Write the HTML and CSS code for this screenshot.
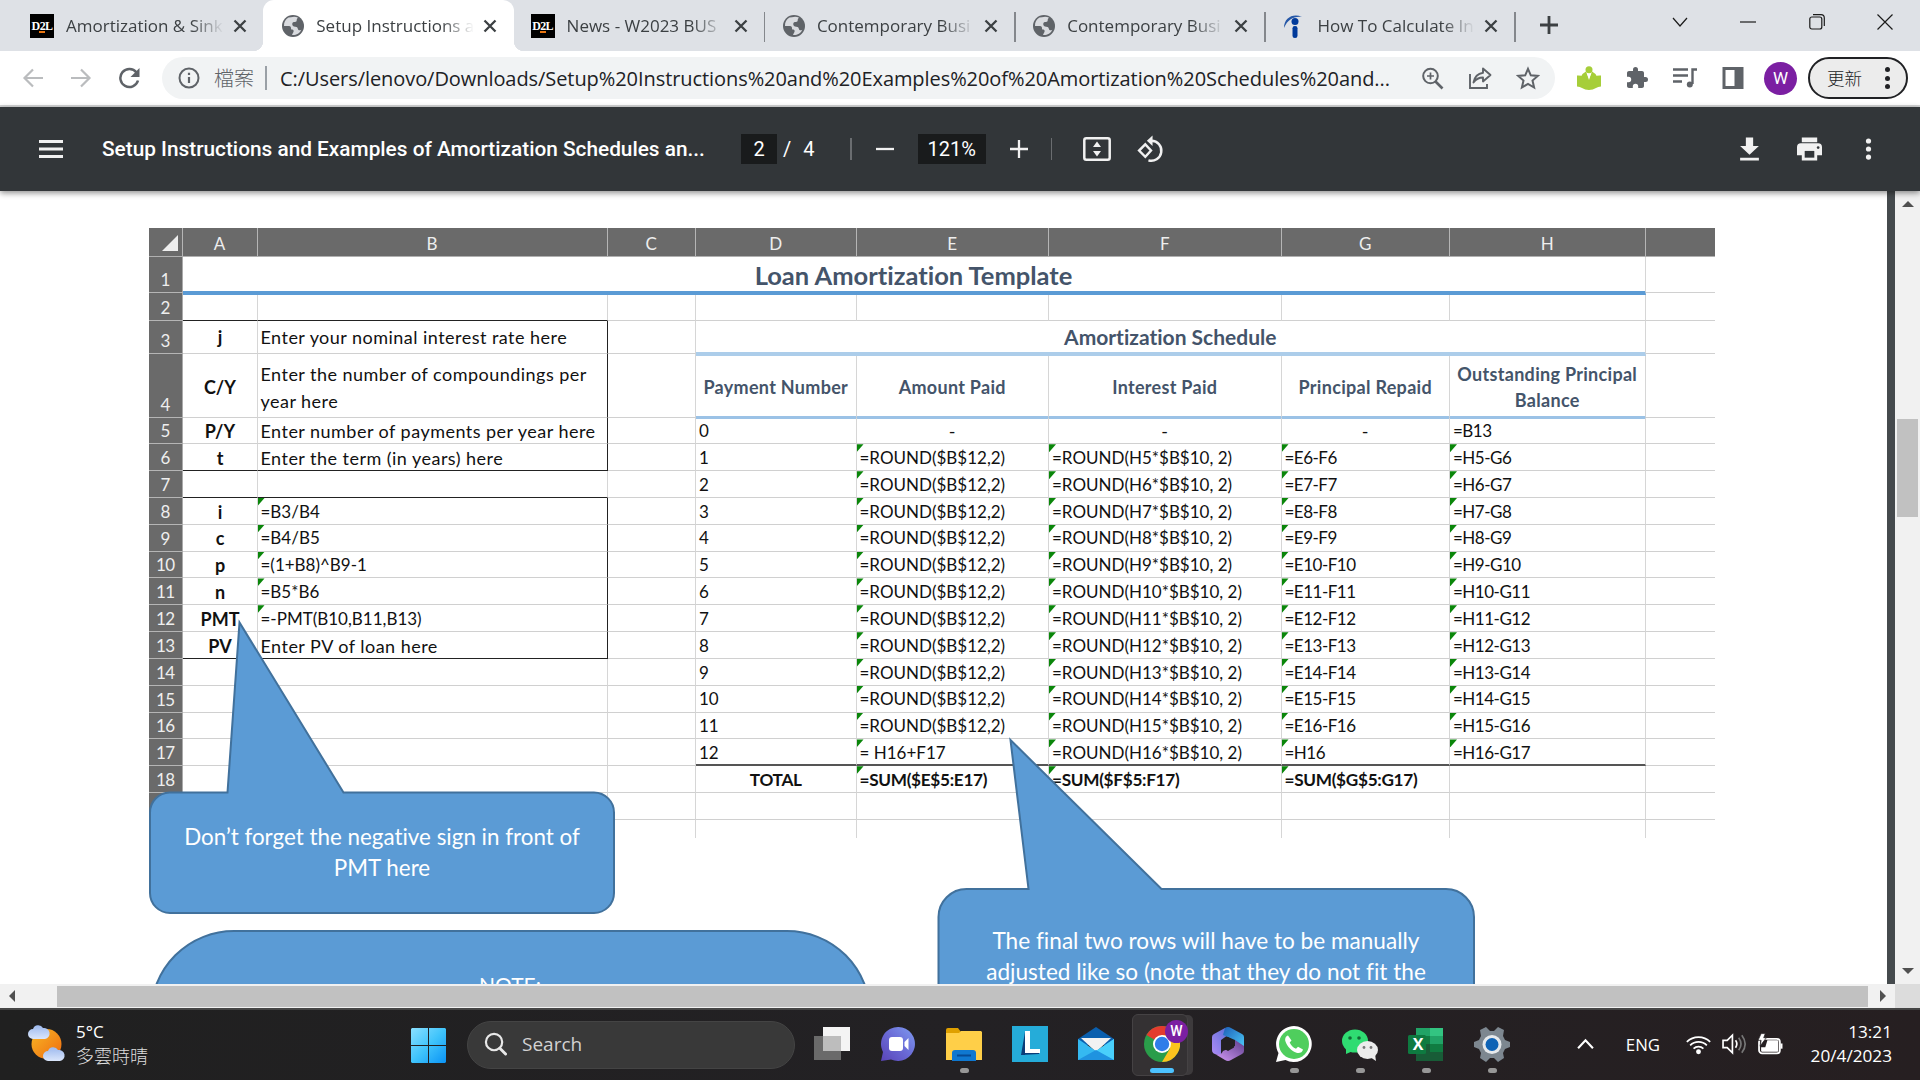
FILE: index.html
```html
<!DOCTYPE html>
<html lang="en">
<head>
<meta charset="utf-8">
<title>Setup Instructions and Examples</title>
<link rel="stylesheet" href="styles.css">
</head>
<body>
<svg class="defs" width="0" height="0" aria-hidden="true">
  <symbol id="globe" viewBox="0 0 24 24"><circle cx="12" cy="12" r="11" fill="#5f6368"/><path d="M10 3.2 7.5 3.6C4.5 5.2 2.8 8.4 3 12l5 .1c1.6.2 2 1.2 2 2.4 0 1 1 1 1.900 1.200 1 .3.900 1.800.300 2.800-.5.9-.9 1.700-1.200 2.500 3.500.600 7.800-1.600 9.300-5.300-1.500 1.100-3.100.600-3.400-.600-.3-1.600-1-2.400-2.600-2.400-2.300 0-3.300-1.200-3-3.200.2-1.200 1.300-1.500 2.500-1.500 1.500 0 2-.7 1.900-2 0-1.300 1-1.600 1.200-2.500A9 9 0 0 0 10 3.200z" fill="#dfe2e6" opacity=".95"/></symbol>
  <symbol id="x" viewBox="0 0 14 14"><path d="M1.500 1.500 12.500 12.500M12.500 1.500 1.500 12.500" stroke="#3c4043" stroke-width="2.300" fill="none"/></symbol>
</svg>

<header class="tabs">
  <div class="tab"><span class="d2l">D2L<i></i></span><span class="title">Amortization &amp; Sinki</span><svg class="close"><use href="#x"/></svg></div>
  <div class="tab active"><svg class="fav"><use href="#globe"/></svg><span class="title">Setup Instructions a</span><svg class="close"><use href="#x"/></svg></div>
  <div class="tab"><span class="d2l">D2L<i></i></span><span class="title">News - W2023 BUS</span><svg class="close"><use href="#x"/></svg></div>
  <div class="tab sep"><svg class="fav"><use href="#globe"/></svg><span class="title">Contemporary Busi</span><svg class="close"><use href="#x"/></svg></div>
  <div class="tab sep"><svg class="fav"><use href="#globe"/></svg><span class="title">Contemporary Busi</span><svg class="close"><use href="#x"/></svg></div>
  <div class="tab sep last"><svg class="fav" viewBox="0 0 24 24"><path d="M2 14C2 4 11-1 20 3 12 2 6 5 2 14z" fill="#2557a7"/><circle cx="13" cy="7.500" r="3.500" fill="#003a9b"/><rect x="10.500" y="12" width="5" height="12" rx="2.300" fill="#003a9b"/></svg><span class="title">How To Calculate In</span><svg class="close"><use href="#x"/></svg></div>
  <svg class="plus" viewBox="0 0 18 18"><path d="M9 0v18M0 9h18" stroke="#3c4043" stroke-width="2.800"/></svg>
  <div class="winctl">
    <svg viewBox="0 0 16 16"><path d="m1 4 7 8 7-8"/></svg>
    <svg viewBox="0 0 16 16"><path d="M0 8h16"/></svg>
    <svg viewBox="0 0 16 16"><rect x=".8" y="3" width="12" height="12" rx="2"/><path d="M4 .7h8q3.300 0 3.300 3.300v8"/></svg>
    <svg viewBox="0 0 16 16"><path d="m.5.5 15 15m0-15-15 15"/></svg>
  </div>
</header>

<div class="toolbar">
  <div class="nav">
    <svg viewBox="0 0 22 22" stroke="#babcbe" stroke-width="2.200" fill="none"><path d="M21 11H3M11 2.500 2.500 11l8.500 8.500"/></svg>
    <svg viewBox="0 0 22 22" stroke="#babcbe" stroke-width="2.200" fill="none"><path d="M1 11h18M11 2.500l8.500 8.500-8.500 8.500"/></svg>
    <svg viewBox="0 0 22 22" fill="none"><path d="M18.500 5.500A9 9 0 1 0 20 13.500" stroke="#5f6368" stroke-width="2.500"/><path d="M21.500 1v9h-9z" fill="#5f6368"/></svg>
  </div>
  <div class="omnibox">
    <svg class="info" viewBox="0 0 22 22"><circle cx="11" cy="11" r="9.500" fill="none" stroke="#5f6368" stroke-width="2"/><path d="M11 10v6M11 5.800v2.300" stroke="#5f6368" stroke-width="2.200"/></svg>
    <span class="scheme">檔案</span><span class="bar"></span>
    <span class="url">C:/Users/lenovo/Downloads/Setup%20Instructions%20and%20Examples%20of%20Amortization%20Schedules%20and...</span>
    <div class="actions">
      <svg viewBox="0 0 24 24" fill="none" stroke="#5f6368" stroke-width="2"><circle cx="10.500" cy="10" r="7.300"/><path d="M10.500 6.500v7M7 10h7" stroke-width="1.700"/><path d="m15.500 15.500 7 7" stroke-width="2.600"/></svg>
      <svg viewBox="0 0 24 24" fill="none" stroke="#5f6368" stroke-width="1.900"><path d="M2 8v14h17v-4"/><path d="M15 2.500 22.500 9 15 15.500v-4c-4 0-7 1.500-9.500 5C6.500 11 9.500 7.500 15 6.700z" stroke-linejoin="round"/></svg>
      <svg viewBox="0 0 24 24" fill="none" stroke="#5f6368" stroke-width="2"><path d="m12 2.800 2.800 6.500 7 .6-5.300 4.700 1.600 6.900L12 17.800l-6.100 3.700 1.600-6.900L2.200 9.900l7-.6z"/></svg>
    </div>
  </div>
  <div class="ext">
    <svg viewBox="0 0 24 24"><path d="M0 9.500q7-.5 12 4 5-4.500 12-4v11q-3 0-5 1.500-3 2-7 2t-7-2q-2-1.500-5-1.500z" fill="#a6ce39"/><path d="M4 11q1.500-4 5-5.500l3 7 3-7q3.500 1.500 5 5.500-5 .5-8 4-3-3.500-8-4z" fill="#a6ce39"/><path d="M9.500 6.500 12 14l2.500-7.500z" fill="#fff"/><circle cx="12" cy="3.800" r="3.500" fill="#a6ce39"/></svg>
    <svg viewBox="0 0 24 24"><path d="M20.500 11H19V7c0-1.100-.9-2-2-2h-4V3.500a2.500 2.500 0 0 0-5 0V5H4c-1.100 0-2 .9-2 2v3.800h1.500a2.700 2.700 0 0 1 0 5.400H2V20c0 1.100.9 2 2 2h3.800v-1.500a2.700 2.700 0 0 1 5.400 0V22H17c1.100 0 2-.9 2-2v-4h1.500a2.500 2.500 0 0 0 0-5z" fill="#5f6368"/></svg>
    <svg viewBox="0 0 24 24" fill="none" stroke="#5f6368" stroke-width="2.400"><path d="M0 3.500h15M0 9.500h15M0 15.500h9M24 3.500h-4.500V18"/><circle cx="16.800" cy="18.500" r="3" fill="#5f6368" stroke="none"/></svg>
    <svg viewBox="0 0 24 24"><path d="M1.500 1h21v22h-21z" fill="#5f6368"/><path d="M4.500 4h9v16h-9z" fill="#fff"/></svg>
  </div>
  <span class="avatar">W</span>
  <div class="update">更新<span class="dots"><i></i><i></i><i></i></span></div>
</div>

<div class="pdfbar">
  <svg class="burger" viewBox="0 0 24 20"><path d="M0 2.500h24M0 10h24M0 17.500h24" stroke="#f1f1f1" stroke-width="3"/></svg>
  <span class="doc">Setup Instructions and Examples of Amortization Schedules an...</span>
  <span class="page">2</span><span class="slash">/</span><span class="pages">4</span>
  <span class="vbar first"></span>
  <svg class="minus" viewBox="0 0 18 18"><path d="M0 9h18" stroke="#f1f1f1" stroke-width="2.300"/></svg>
  <span class="zoom">121%</span>
  <svg class="add" viewBox="0 0 18 18"><path d="M0 9h18M9 0v18" stroke="#f1f1f1" stroke-width="2.300"/></svg>
  <span class="vbar"></span>
  <svg class="fit" viewBox="0 0 28 24"><rect x="1.300" y="1.300" width="25.400" height="21.400" rx="2" fill="none" stroke="#f1f1f1" stroke-width="2.500"/><path d="M14 4.500 18 10h-8zM14 19.500l4-5.500h-8z" fill="#f1f1f1"/></svg>
  <svg class="rot" viewBox="0 0 26 26"><path d="m8 8.500 5.500 6L8 20.500 2 14.500z" fill="none" stroke="#f1f1f1" stroke-width="2.300"/><path d="M14 5a9.700 9.700 0 1 1-3 19" fill="none" stroke="#f1f1f1" stroke-width="2.400"/><path d="M15 0v10L9.500 5z" fill="#f1f1f1"/></svg>
  <div class="right">
    <svg viewBox="0 0 24 24"><path d="M8.500 1h7v8H21l-9 8.500L3 9h5.500zM3 20.500h18V23H3z" fill="#f1f1f1"/></svg>
    <svg viewBox="0 0 26 24"><path d="M5 0h16v5H5zM4 6h18q4 0 4 4v8.500h-5V24H5v-5.500H0V10q0-4 4-4z" fill="#f1f1f1"/><path d="M8 14h10v7H8z" fill="#323639"/><circle cx="22" cy="10.500" r="1.400" fill="#323639"/></svg>
    <svg viewBox="0 0 24 24" fill="#f1f1f1"><circle cx="12" cy="4.300" r="2.500"/><circle cx="12" cy="12" r="2.500"/><circle cx="12" cy="19.700" r="2.500"/></svg>
  </div>
</div>

<main class="viewer">
  <div class="paper">
    <div class="sheet" id="sheet"></div>
    <svg class="shapes" width="1887" height="793" viewBox="0 191 1887 793">
      <g fill="#5b9bd5" stroke="#41719c" stroke-width="2">
        <path d="M169.500 792.500h58L239.500 622.500 343.500 792.500H594a20 20 0 0 1 20 20V893a20 20 0 0 1-20 20H170a20 20 0 0 1-20-20V812.500a20 20 0 0 1 19.500-20z"/>
        <path d="M151 1014a83 83 0 0 1 83-83h553a83 83 0 0 1 83 83v60H151z"/>
        <path d="M966.500 889h62L1010.500 740 1161.500 889H1446a28 28 0 0 1 28 28v120H938.500V917a28 28 0 0 1 28-28z"/>
      </g>
    </svg>
    <p class="note n1">Don’t forget the negative sign in front of<br>PMT here</p>
    <p class="note n2">NOTE:</p>
    <p class="note n3">The final two rows will have to be manually<br>adjusted like so (note that they do not fit the</p>
  </div>
  <div class="vscroll"><i class="up"></i><b></b><i class="down"></i></div>
</main>
<div class="hscroll"><i class="lf"></i><b></b><i class="rt"></i><span></span></div>

<footer class="taskbar">
  <div class="weather">
    <svg viewBox="0 0 38 42"><defs><linearGradient id="sun" x1="0" y1="0" x2="1" y2="1"><stop offset="0" stop-color="#f9b825"/><stop offset="1" stop-color="#ee6a10"/></linearGradient><linearGradient id="cl" x1="0" y1="0" x2="0" y2="1"><stop offset="0" stop-color="#9db9ee"/><stop offset="1" stop-color="#dbe6fb"/></linearGradient></defs><circle cx="18.500" cy="22" r="15" fill="url(#sun)"/><path d="M5 17a5 5 0 0 1 0-10 5.500 5.500 0 0 1 10-1 5.500 5.500 0 0 1 2 11z" fill="url(#cl)"/><path d="M20 39a5 5 0 0 1 0-10 5.500 5.500 0 0 1 10-1 5.500 5.500 0 0 1 2 11z" fill="url(#cl)"/></svg>
    <div><div class="temp">5°C</div><div class="cond">多雲時晴</div></div>
  </div>
  <svg class="start" viewBox="0 0 35 35"><defs><linearGradient id="w" x1="0" y1="0" x2="1" y2="1"><stop offset="0" stop-color="#8be0ff"/><stop offset=".5" stop-color="#40c4fb"/><stop offset="1" stop-color="#0a93f5"/></linearGradient></defs><path d="M1 0h16v17H0V1zM18 0h16l1 1v16H18zM0 18h17v17H1l-1-1zM18 18h17v16l-1 1H18z" fill="url(#w)"/></svg>
  <div class="search"><svg viewBox="0 0 24 24"><circle cx="10.500" cy="10" r="8.500" fill="none" stroke="#e8e8e8" stroke-width="2.300"/><path d="m16.500 16.500 6 6" stroke="#e8e8e8" stroke-width="3" stroke-linecap="round"/></svg><span>Search</span></div>
  <div class="apps">
    <div class="app"><svg viewBox="0 0 36 36"><path d="M9 1h27v24H9z" fill="#f4f4f4"/><path d="M0 10h27v24H0z" fill="#777" opacity=".85"/><path d="M9 10h18v15H9z" fill="#bdbdbd"/></svg></div>
    <div class="app"><svg viewBox="0 0 36 36"><defs><linearGradient id="ch" x1="1" y1="0" x2="0" y2="1"><stop offset="0" stop-color="#7f9cf0"/><stop offset=".5" stop-color="#6a6ad6"/><stop offset="1" stop-color="#5a44b8"/></linearGradient></defs><path d="M18.500 1A17 17 0 1 1 11 33.500L1 35l2-9A17 17 0 0 1 18.500 1z" fill="url(#ch)"/><rect x="9" y="11" width="14" height="14" rx="3" fill="#fff"/><path d="m24.500 16 4-4v12l-4-4z" fill="#fff"/></svg></div>
    <div class="app run"><svg viewBox="0 0 36 36"><path d="M0 4q0-2 2-2h10l3 4v5H0z" fill="#dfa000"/><path d="M0 7h13l2-2h20l1 1v28H0z" fill="#ffcf48"/><path d="M6 35V27q0-3 3-3h18q3 0 3 3v8z" fill="#0f78d0"/><path d="M11 29.500h14" stroke="#064a94" stroke-width="2"/></svg></div>
    <div class="app"><svg viewBox="0 0 36 36"><path d="M0 0h36v36H0z" fill="#25acd9"/><path d="m13 6-4 23h4z" fill="#0b3d78"/><path d="M13 5h5v18h10v4H13z" fill="#fff"/><path d="m9 29 4-2h14v1z" fill="#0b3d78"/></svg></div>
    <div class="app"><svg viewBox="0 0 36 36"><path d="M0 13 18 1l18 12v6H0z" fill="#0a5fae"/><path d="M3 12h30L18 26z" fill="#f2f2f2"/><path d="m0 13 18 12 18-12v21H0z" fill="#35b9f1"/><path d="m18 25 18-12v21z" fill="#49d0fb"/><path d="m0 34 18-10 18 10z" fill="#1f93e0"/></svg></div>
    <div class="app chrome"><svg viewBox="0 0 36 36"><circle cx="18" cy="18" r="18" fill="#2a9d4a"/><path d="M18 18 2.400 9A18 18 0 0 1 33.600 9z" fill="#e33b2e"/><path d="M18 9h15.600A18 18 0 0 1 18 36l8-13.500z" fill="#fcc31e"/><circle cx="18" cy="18" r="9" fill="#fff"/><circle cx="18" cy="18" r="7.200" fill="#2f7de9"/></svg><b>W</b></div>
    <div class="app"><svg viewBox="0 0 36 36"><defs><linearGradient id="ma" x1="1" y1="0" x2="0" y2="1"><stop offset="0" stop-color="#5a6fd8"/><stop offset="1" stop-color="#b08cf5"/></linearGradient><linearGradient id="mb" x1="0" y1="0" x2="1" y2="1"><stop offset="0" stop-color="#1c5fb8"/><stop offset="1" stop-color="#4fd0fb"/></linearGradient><linearGradient id="mc" x1="0" y1="1" x2="1" y2="0"><stop offset="0" stop-color="#d49bf7"/><stop offset="1" stop-color="#5d3d8c"/></linearGradient></defs><path d="M15 2 4 8q-2 1-2 3v13q0 3 3 4l6 2V14l7-5V2z" fill="url(#ma)"/><path d="M15 2q3-2 6 0l11 6q2 1 2 3v14l-9-3v-8l-12-5z" fill="url(#mb)"/><path d="M34 20v5q0 2-2 3l-11 6q-3 2-6 0L5 28q6 2 8-3l12-5V14z" fill="url(#mc)"/><path d="m18 11 6 3.500v7L18 25l-6-3.500v-7z" fill="#231f22"/></svg></div>
    <div class="app run"><svg viewBox="0 0 36 36"><path d="M18 0a18 18 0 1 1-8.500 34L0 36l2.500-9A18 18 0 0 1 18 0z" fill="#fff"/><circle cx="18" cy="18" r="15" fill="#4fce5d"/><path d="M12 9.500c-2 .5-3.500 3-2.500 6 1.500 5 6 9.500 11 11.300 3 1 6-.5 6.500-3.300l-5-2.700-2 2c-3-1.200-5-3.300-6.300-6.200l1.800-2z" fill="#fff"/></svg></div>
    <div class="app run"><svg viewBox="0 0 36 36"><ellipse cx="13" cy="15" rx="13" ry="11.500" fill="#2fdc72"/><path d="M4 21v7l7-3z" fill="#2fdc72"/><circle cx="8" cy="12" r="1.800" fill="#126b34"/><circle cx="17" cy="12" r="1.800" fill="#126b34"/><ellipse cx="25.500" cy="24" rx="10.500" ry="9" fill="#ececec"/><path d="m28 31 6 4-1-7z" fill="#ececec"/><circle cx="22" cy="21.500" r="1.400" fill="#777"/><circle cx="29" cy="21.500" r="1.400" fill="#777"/></svg></div>
    <div class="app run"><svg viewBox="0 0 36 36"><path d="M8 2h14v8H8z" fill="#21a366"/><path d="M22 2h13v8H22z" fill="#33c481"/><path d="M8 10h14v8H8z" fill="#107c41"/><path d="M22 10h13v8H22z" fill="#21a366"/><path d="M8 18h27v17H8z" fill="#185c37"/><path d="M22 18h13v8H22z" fill="#107c41"/><rect y="9" width="18" height="19" rx="1.500" fill="#0e7a40"/></svg><em>X</em></div>
    <div class="app run"><svg viewBox="0 0 36 36"><path d="m12 1 4 4h4l4-4 6 3-1 6 2 4 5 2v5l-5 2-2 4 1 5-6 4-4-4h-4l-4 4-6-4 1-5-2-4-5-2v-5l5-2 2-4-1-6z" fill="#7d8790"/><circle cx="18" cy="18.500" r="9.500" fill="#e6e9ec"/><circle cx="18" cy="18.500" r="6.500" fill="#0f63b5"/></svg></div>
  </div>
  <div class="tray">
    <svg class="chev" viewBox="0 0 16 10"><path d="m1 9 7-7.500L15 9" fill="none" stroke="#fff" stroke-width="2"/></svg>
    <span class="lang">ENG</span>
    <svg class="wifi" viewBox="0 0 24 20" fill="none" stroke="#fff" stroke-width="1.700"><path d="M.8 8a16 16 0 0 1 22.400 0M4 11.300a11.500 11.500 0 0 1 16 0M7.300 14.500a6.800 6.800 0 0 1 9.400 0"/><circle cx="12" cy="17.500" r="1.500" fill="#fff"/></svg>
    <svg class="vol" viewBox="0 0 24 20" fill="none" stroke="#fff" stroke-width="1.600"><path d="M1 6.500h4L10 1.500v17L5 13.500H1zM13 6.500q2.500 3.500 0 7"/><path d="M16 4q4.500 6 0 12M19 1.500q6.500 8.500 0 17" stroke="#777"/></svg>
    <svg class="bat" viewBox="0 0 24 20"><rect x="1" y="5" width="20" height="14" rx="3" fill="none" stroke="#fff" stroke-width="1.700"/><path d="M9 6.500h9.500q1 0 1 1v9q0 1-1 1H4q-1 0-1-1V13h4z" fill="#fff"/><path d="M21.500 9.500h2v5h-2z" fill="#fff"/><path d="M3 0h4L5.500 4H8L2 12l1-5.500H0z" fill="#fff" stroke="#231f21" stroke-width=".7"/></svg>
    <div class="clock"><div>13:21</div><div>20/4/2023</div></div>
  </div>
</footer>
<script src="sheet.js"></script>
</body>
</html>
```
FILE: sheet.js
```js
// Builds the worksheet rows. A leading "^" marks a cell with the green formula flag.
const heights = [36, 27.5, 33, 64, 26.830, 26.830, 26.830, 26.830, 26.830, 26.830, 26.830, 26.830, 26.830, 26.830, 26.830, 26.830, 26.830, 26.830, 26.830, 18.500];
const left = {
  3: ['j', 'Enter your nominal interest rate here'],
  4: ['C/Y', 'Enter the number of compoundings per<br>year here'],
  5: ['P/Y', 'Enter number of payments per year here'],
  6: ['t', 'Enter the term (in years) here'],
  8: ['i', '^=B3/B4'],
  9: ['c', '^=B4/B5'],
  10: ['p', '^=(1+B8)^B9-1'],
  11: ['n', '^=B5*B6'],
  12: ['PMT', '^=-PMT(B10,B11,B13)'],
  13: ['PV', 'Enter PV of loan here']
};
function cell(cls, text = '') {
  const flag = text.startsWith('^');
  return `<div class="c ${cls}${flag ? ' flag' : ''}"><span>${flag ? text.slice(1) : text}</span></div>`;
}
function schedule(r) {
  if (r === 3) return cell('merge5 h3', 'Amortization Schedule');
  if (r === 4) return ['Payment Number', 'Amount Paid', 'Interest Paid', 'Principal Repaid', 'Outstanding Principal<br>Balance'].map(t => cell('h4', t)).join('');
  if (r === 5) return cell('f', '0') + cell('mid', '-') + cell('mid', '-') + cell('mid', '-') + cell('f tight', '=B13');
  if (r > 5 && r < 18) {
    const last = r === 17 ? ' end' : '';
    return cell('f' + last, String(r - 5))
      + cell('f' + last, r === 17 ? '^= H16+F17' : '^=ROUND($B$12,2)')
      + cell('f' + last, `^=ROUND(H${r - 1}*$B$10, 2)`)
      + cell('f tight' + last, r === 17 ? '^=H16' : `^=E${r}-F${r}`)
      + cell('f tight' + last, `^=H${r - 1}-G${r}`);
  }
  if (r === 18) return cell('mid sum', 'TOTAL') + cell('f sum', '^=SUM($E$5:E17)') + cell('f sum', '^=SUM($F$5:F17)') + cell('f sum', '^=SUM($G$5:G17)') + cell('');
  return cell('').repeat(5);
}
let html = '<div class="row head"><div class="corner"></div>' + [...'ABCDEFGH'].map(l => `<div>${l}</div>`).join('') + '<div class="none"></div></div>';
heights.forEach((h, i) => {
  const r = i + 1;
  let body;
  if (r === 1) body = cell('merge8 h1', 'Loan Amortization Template');
  else {
    const box = (r >= 3 && r <= 6) || (r >= 8 && r <= 13);
    const dark = r === 2 || r === 6 || r === 7 || r === 13 ? ' under' : '';
    const l = left[r] || ['', ''];
    body = cell((r > 13 ? 'open' : 'key') + dark, l[0]) + cell((box ? 'boxed' : '') + dark + (l[1].startsWith('^') ? ' f' : ''), l[1]) + cell('') + schedule(r);
  }
  html += `<div class="row r${r}" style="height:${h}px"><div class="num">${r < 19 ? r : ''}</div>${body}${cell('open')}</div>`;
});
document.getElementById('sheet').innerHTML = html;
```
FILE: styles.css
```css
*{box-sizing:border-box}
body{margin:0;width:1920px;height:1080px;overflow:hidden;display:flex;flex-direction:column;background:#fff;font-family:"Open Sans","Noto Sans CJK TC",sans-serif;color:#3c4043}
svg{display:block;flex:none}
.defs{position:absolute}

.tabs{height:51px;flex:none;background:#dee1e6;display:flex;padding-left:13px;align-items:stretch}
.tab{width:250.300px;flex:none;display:flex;align-items:center;padding-left:17px;font-size:17px;position:relative}
.tab.active{background:#fff;border-radius:11px 11px 0 0}
.tab.active::before,.tab.active::after{content:"";position:absolute;bottom:0;width:10px;height:10px}
.tab.active::before{left:-10px;background:radial-gradient(circle at 0 0,#dee1e6 10px,#fff 10.500px)}
.tab.active::after{right:-10px;background:radial-gradient(circle at 100% 0,#dee1e6 10px,#fff 10.500px)}
.tab.sep::before,.tab.last::after{content:"";position:absolute;left:0;top:12px;width:1.500px;height:30px;background:#84878c}
.tab.last::after{left:auto;right:-1px}
.fav{width:24px;height:24px;margin-left:1px}
.d2l{width:24px;height:24px;background:#000;color:#fff;font:700 12px/24px "Liberation Serif",serif;text-align:center;position:relative;letter-spacing:-.6px}
.d2l i{position:absolute;left:9px;top:17px;width:6px;height:2px;background:#e87511}
.title{width:160px;margin-left:12px;overflow:hidden;white-space:nowrap;-webkit-mask-image:linear-gradient(90deg,#000 125px,transparent 158px)}
.fav+.title{margin-left:11px}
.close{width:14px;height:14px;margin-left:7px}
.plus{width:18px;height:18px;margin:16px 0 0 25px}
.winctl{display:flex;gap:52.500px;margin:14px 0 0 114px}
.winctl svg{width:16px;height:16px;fill:none;stroke:#1b1b1b;stroke-width:1.200}

.toolbar{height:56px;flex:none;display:flex;align-items:center;border-bottom:2px solid #d4d5d6;background:#fff}
.nav{display:flex;gap:26px;margin-left:22px}
.nav svg{width:22px;height:22px}
.omnibox{margin-left:22px;width:1393px;height:42px;border-radius:21px;background:#f1f3f4;display:flex;align-items:center}
.info{width:22px;height:22px;margin-left:16px}
.scheme{font-size:20px;font-weight:300;color:#5f6368;margin-left:14px;font-family:"Noto Sans CJK TC",sans-serif;margin-bottom:2px}
.bar{width:2px;height:24px;background:#9aa0a6;margin-left:11px}
.url{font-size:20px;letter-spacing:-.07px;color:#202124;white-space:nowrap;margin-left:13px;width:1128px}
.actions{display:flex;gap:24px;margin-left:12px}
.actions svg,.ext svg{width:24px;height:24px}
.ext{display:flex;gap:24px;margin-left:22px}
.avatar{width:33px;height:33px;border-radius:50%;background:#7b1fa2;color:#fff;font:17px/33px "Roboto",sans-serif;text-align:center;margin-left:19px}
.update{margin-left:11px;width:100px;height:42px;border:2px solid #202124;border-radius:21px;background:#ececec;display:flex;align-items:center;font:300 17.500px "Noto Sans CJK TC",sans-serif;color:#202124;padding:0 0 2px 17px}
.dots{display:grid;gap:3.500px;margin:2px 0 0 23px}
.dots i{width:5px;height:5px;border-radius:50%;background:#202124}

.pdfbar{height:84px;flex:none;background:#323639;color:#fff;display:flex;align-items:center;font:20px "Roboto",sans-serif;position:relative;z-index:3;box-shadow:0 2px 6px rgba(0,0,0,.45)}
.burger{width:24px;height:20px;margin-left:39px}
.doc{font-weight:500;font-size:20.800px;margin-left:39px;width:639px;white-space:nowrap}
.page,.zoom{background:#191b1c;height:30px;line-height:31px;text-align:center}
.page{width:36px}
.zoom{width:68px;margin-left:24px}
.slash{margin-left:6px}
.pages{margin-left:12px;width:12px}
.vbar{width:1.500px;height:27px;background:#6a6d70;margin-left:30px}
.vbar.first{margin-left:35px}
.vbar{height:22px}
.minus,.add{width:18px;height:18px;margin-left:24px}
.zoom+.add{margin-left:24px;margin-right:-7px}
.fit{width:28px;height:28px;margin-left:31px}
.rot{width:27px;height:30px;margin-left:26px}
.right{margin-left:auto;margin-right:39px;display:flex;gap:34.500px}
.right svg{width:25px;height:26px}

.viewer{height:793px;flex:none;display:flex;background:#454a4d;overflow:hidden}
.paper{width:1887px;background:#fff;position:relative;overflow:hidden}
.vscroll{margin-left:8px;width:25px;background:#f1f1f1;display:flex;flex-direction:column;align-items:center}
.vscroll b{width:21px;height:98px;background:#c1c1c1;margin-top:212px}
.vscroll i,.hscroll i{border:6px solid transparent}
.up{border-bottom-color:#505050!important;margin-top:4px;height:0}
.down{border-top-color:#505050!important;margin-top:451px;height:0}
.hscroll{height:24px;flex:none;background:#f1f1f1;display:flex;align-items:center}
.hscroll b{width:1811px;height:21px;background:#c1c1c1}
.hscroll span{width:25px;height:24px;background:#dcdcdc}
.lf{border-right-color:#505050!important;margin:0 42px 0 3px}
.rt{border-left-color:#505050!important;margin:0 3px 0 12px}

.sheet{margin:37px 0 0 149px;width:1566px;font-family:"Lato",sans-serif;font-variant-ligatures:none;font-size:18px;color:#111}
.row{display:grid;grid-template-rows:100%;grid-template-columns:33.500px 75px 350px 88.500px 160.500px 192.500px 232.500px 168.500px 195.500px 69.500px}
.head{height:29px;background:#6a6a6a;color:#eee;font-size:17px;border-bottom:1px solid #b0b0b0}
.head div{border-right:1px solid #b5b5b5;display:flex;align-items:center;justify-content:center;padding-top:2px}
.head .none{border:0}
.corner::after{content:"";border:8px solid #eee;border-top-color:transparent;border-left-color:transparent;margin-left:9px}
.num{background:#6a6a6a;color:#eee;border-bottom:1px solid #b5b5b5;border-right:1px solid #aaa;display:flex;align-items:flex-end;justify-content:center;font-size:17px;letter-spacing:-.6px;line-height:20px;padding-bottom:2px}
.c{border-right:1px solid #d6d6d6;border-bottom:1px solid #d0d0d0;display:flex;align-items:center;padding:2px 0 0 3px;letter-spacing:.47px;line-height:26.500px;white-space:nowrap;position:relative;min-width:0}
.open{border-right-color:transparent}
.row .c:last-child{border-right:0}
.key{font-weight:700;justify-content:center;padding-left:1px;letter-spacing:0}
.boxed{border-right-color:#222}
.under{border-bottom-color:#222}
.f{font-size:17px;letter-spacing:0}
.tight{letter-spacing:-.5px}
.mid{justify-content:center;padding-left:0}
.sum{font-weight:700;font-size:17.200px;letter-spacing:-.3px}
.flag::before{content:"";position:absolute;left:0;top:0;width:7px;height:8px;background:#0a860a;clip-path:polygon(0 0,100% 0,0 100%)}
.merge8{grid-column:2/10}
.merge5{grid-column:5/10}
.h1,.h3,.h4{justify-content:center;text-align:center;color:#44546a;font-weight:700;padding-left:0}
.h1{font-size:25.500px;letter-spacing:0;border-bottom:4px solid #5b9bd5;margin-bottom:-2px;z-index:1}
.h3{font-size:21px;letter-spacing:0;border-bottom:4px solid #accdea;margin-bottom:-2px;z-index:1}
.h4{letter-spacing:.3px;border-bottom:3px solid #9bc2e6;margin-bottom:-1px}
.r4 .c{padding-top:5px}
.end{border-bottom:2px solid #555}
.r20 .c,.r20 .num{border-bottom:0}
.shapes{position:absolute;left:0;top:0}
.note{position:absolute;margin:0;color:#fff;font:22.400px/31px "Lato",sans-serif;font-variant-ligatures:none;text-align:center;white-space:nowrap;transform:translateX(-50%)}
.n1{left:382px;top:629.500px}
.n2{left:510px;top:778px;font-size:21px}
.n3{left:1206px;top:734px;font-size:22.600px}

.taskbar{height:72px;flex:none;border-top:2px solid #454545;background:linear-gradient(90deg,#202020,#232124 50%,#261f21);display:flex;align-items:center;color:#fff;position:relative}
.weather{display:flex;align-items:center;margin-left:28px;width:383px;gap:10px;padding-bottom:2px}
.weather svg{width:38px;height:42px;margin-bottom:2px}
.temp{font-size:17px;line-height:22px}
.cond{font:300 18px/24px "Noto Sans CJK TC",sans-serif;color:#ddd}
.start{width:35px;height:35px}
.search{margin-left:21px;width:328px;height:48px;border-radius:24px;background:#393939;border:1px solid #444;display:flex;align-items:center;font-size:19px;color:#d2d2d2;padding:0 0 2px 16px;gap:15px}
.search svg{width:23px;height:24px}
.apps{display:flex;margin-left:4px;height:70px}
.app{width:66px;display:flex;align-items:center;justify-content:center;position:relative}
.app svg{width:36px;height:36px;position:relative;margin-bottom:2px}
.run::after{content:"";position:absolute;left:29px;top:58px;width:9px;height:5px;border-radius:3px;background:#979797}
.chrome::before{content:"";position:absolute;left:3px;top:4px;width:54px;height:60px;border-radius:6px;background:#343133;border:1px solid #454244;box-shadow:6px 0 0 -1px #3d3a3c}
.chrome::after{content:"";position:absolute;left:21px;top:58px;width:24px;height:5px;border-radius:3px;background:#4cc2ff}
.chrome b{position:absolute;left:36px;top:10px;width:23px;height:23px;border-radius:50%;background:#7b1fa2;font:500 14px/23px "Roboto",sans-serif;text-align:center}
.app em{position:absolute;left:18px;top:24px;font:700 16px/20px "Open Sans",sans-serif;width:14px;text-align:center}
.tray{display:flex;align-items:center;margin-left:auto;margin-right:29px;padding-bottom:2px}
.chev{width:17px;height:12px}
.lang{font-size:16.800px;margin:0 0 0 32px}
.wifi{width:25px;height:22px;margin-left:26px}
.vol{width:25px;height:22px;margin-left:11px}
.bat{width:25px;height:24px;margin-left:11px}
.clock{font-size:17.200px;line-height:24px;text-align:right;width:109px;margin-right:-1px}
```
